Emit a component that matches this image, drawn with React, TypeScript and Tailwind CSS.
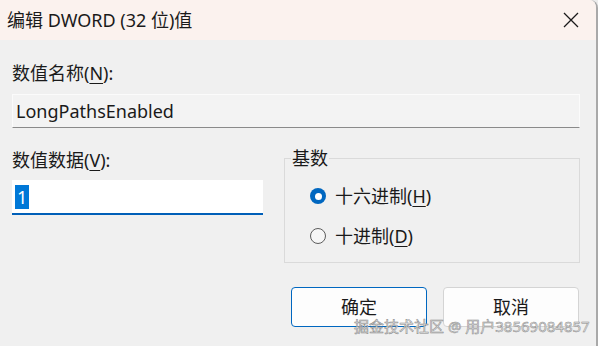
const font = "font-['Noto_Sans','Noto_Sans_CJK_SC',sans-serif]";

function Radio({ checked, label, hotkey }: { checked?: boolean; label: string; hotkey: string }) {
  return (
    <div className="flex items-center h-6">
      {checked ? (
        <span className="w-4 h-4 rounded-full bg-[#0067c0] flex items-center justify-center">
          <span className="w-[7px] h-[7px] rounded-full bg-white" />
        </span>
      ) : (
        <span className="w-4 h-4 rounded-full border border-[#5c5c5c] bg-[#f6f6f6]" />
      )}
      <span className="ml-[9px] text-[18px] text-[#1a1a1a]">
        {label}(<span className="underline underline-offset-[3px]">{hotkey}</span>)
      </span>
    </div>
  );
}

export default function App() {
  return (
    <div className={`w-[598px] h-[346px] bg-[#ececec] relative overflow-hidden ${font}`}>
      <div className="w-[598px] h-[346px] bg-[#f0f0f0] border-r-2 border-[#a9a9a9] rounded-tr-[8px] flex flex-col overflow-hidden">
        {/* 标题栏 */}
        <div className="h-10 bg-[#fbf2ee] flex items-center justify-between pl-[7px] pr-[17px] shrink-0">
          <span className="text-[18px] text-[#1a1a1a] leading-none">编辑 DWORD (32 位)值</span>
          <svg width="16" height="16" viewBox="0 0 16 16" className="text-[#1a1a1a]">
            <path d="M1 1 L15 15 M15 1 L1 15" stroke="currentColor" strokeWidth="1.3" fill="none" />
          </svg>
        </div>

        <div className="pl-3 pr-4 flex flex-col">
          <div className="mt-[21px] h-6 flex items-center text-[18px] text-[#1a1a1a]">
            数值名称(<span className="underline underline-offset-[3px]">N</span>):
          </div>
          <div className="mt-[9px] h-[34px] bg-[#f3f3f3] border border-[#fbfbfb] border-b-[#8a8a8a] flex items-center pl-[3px] text-[18px] text-[#1a1a1a]">
            LongPathsEnabled
          </div>

          <div className="mt-[18px] flex gap-[21px]">
            {/* 数值数据 */}
            <div className="w-[251px] flex flex-col">
              <div className="mt-[2px] h-6 flex items-center text-[18px] text-[#1a1a1a]">
                数值数据(<span className="underline underline-offset-[3px]">V</span>):
              </div>
              <div className="mt-2 h-[35px] bg-white border-b-2 border-[#005fb8] flex items-center pl-[3px]">
                <span className="bg-[#0078d7] text-white text-[18px] leading-[24px] px-[2px]">1</span>
              </div>
            </div>

            {/* 基数 */}
            <fieldset className="flex-1 border border-[#dadada] h-[117px]">
              <legend className="ml-[6px] px-[1px] text-[18px] leading-6 text-[#1a1a1a]">基数</legend>
              <div className="flex flex-col gap-4 pl-[25px] pt-[14px]">
                <Radio checked label="十六进制" hotkey="H" />
                <Radio label="十进制" hotkey="D" />
              </div>
            </fieldset>
          </div>

          <div className="mt-6 flex justify-end gap-4 pr-[1px]">
            <button className="w-[136px] h-[40px] rounded-[4px] border border-[#0067c0] bg-[#fdfdfd] text-[18px] text-[#1a1a1a]">
              确定
            </button>
            <button className="w-[136px] h-[40px] rounded-[4px] border border-[#d4d4d4] bg-[#fdfdfd] text-[18px] text-[#1a1a1a]">
              取消
            </button>
          </div>
        </div>
      </div>

      {/* 水印 */}
      <div className="absolute left-[354px] top-[316px] text-[15px] leading-[20px] text-[#e4e4e4] [-webkit-text-stroke:0.5px_#8a8a8a] whitespace-nowrap">
        掘金技术社区 @ 用户38569084857
      </div>
    </div>
  );
}
